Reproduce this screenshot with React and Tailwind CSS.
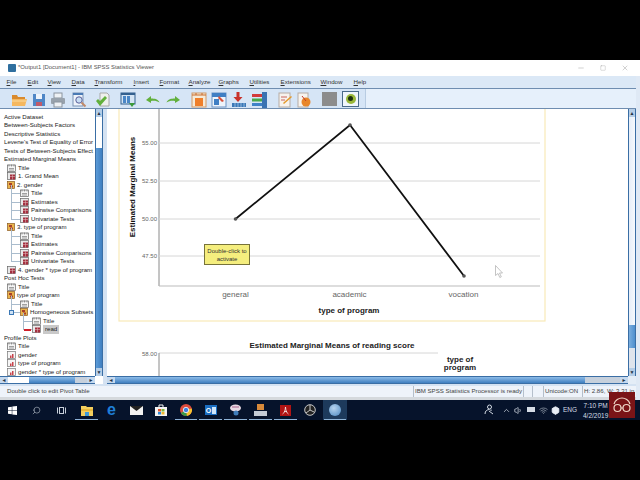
import { Minus, Square, X, Search, ChevronUp, Volume1, Wifi, Box } from "lucide-react"

const font = { sans: "font-['Liberation_Sans',Arial,sans-serif]" }

const menus = [
  ["F", "ile", 21],
  ["E", "dit", 20],
  ["V", "iew", 24],
  ["D", "ata", 23],
  ["T", "ransform", 39],
  ["I", "nsert", 26],
  ["F", "ormat", 29],
  ["A", "nalyze", 30],
  ["G", "raphs", 31],
  ["U", "tilities", 31],
  ["E", "xtensions", 40],
  ["W", "indow", 33],
  ["H", "elp", 20],
]

// d = indent, k = icon type
const rows = [
  { t: "Active Dataset", d: 0 },
  { t: "Between-Subjects Factors", d: 0 },
  { t: "Descriptive Statistics", d: 0 },
  { t: "Levene's Test of Equality of Error", d: 0 },
  { t: "Tests of Between-Subjects Effect", d: 0 },
  { t: "Estimated Marginal Means", d: 0 },
  { t: "Title", d: 3, k: "title" },
  { t: "1. Grand Mean", d: 3, k: "table" },
  { t: "2. gender", d: 3, k: "book" },
  { t: "Title", d: 16, k: "title", l: true },
  { t: "Estimates", d: 16, k: "table", l: true },
  { t: "Pairwise Comparisons", d: 16, k: "table", l: true },
  { t: "Univariate Tests", d: 16, k: "table", l: true },
  { t: "3. type of program", d: 3, k: "book" },
  { t: "Title", d: 16, k: "title", l: true },
  { t: "Estimates", d: 16, k: "table", l: true },
  { t: "Pairwise Comparisons", d: 16, k: "table", l: true },
  { t: "Univariate Tests", d: 16, k: "table", l: true },
  { t: "4. gender * type of program", d: 3, k: "table" },
  { t: "Post Hoc Tests", d: 0 },
  { t: "Title", d: 3, k: "title" },
  { t: "type of program", d: 3, k: "book" },
  { t: "Title", d: 16, k: "title", l: true },
  { t: "Homogeneous Subsets", d: 16, k: "book", l: true, minus: true },
  { t: "Title", d: 28, k: "title", l: true },
  { t: "read", d: 28, k: "table", l: true, sel: true },
  { t: "Profile Plots", d: 0 },
  { t: "Title", d: 3, k: "title" },
  { t: "gender", d: 3, k: "chart" },
  { t: "type of program", d: 3, k: "chart" },
  { t: "gender * type of program", d: 3, k: "chart" },
]

function TreeIcon({ kind }) {
  if (kind === "title")
    return (
      <svg width="9" height="8" viewBox="0 0 9 8" className="shrink-0">
        <rect x="0.5" y="1" width="8" height="6.5" fill="#f4f4f4" stroke="#666" strokeWidth="0.7" />
        <path d="M2 0.5v2M4.5 0.5v2M7 0.5v2M2 4.5h5M2 6h5" stroke="#666" strokeWidth="0.6" />
      </svg>
    )
  if (kind === "book")
    return (
      <svg width="8" height="8" viewBox="0 0 8 8" className="shrink-0">
        <rect x="0.5" y="0.5" width="7" height="7" fill="#e9b44c" stroke="#8a5a22" strokeWidth="0.7" />
        <path d="M2 2h3v2H2zM3 4.500h3v2H3z" fill="#a8402a" />
      </svg>
    )
  if (kind === "chart")
    return (
      <svg width="9" height="8" viewBox="0 0 9 8" className="shrink-0">
        <rect x="0.5" y="0.5" width="8" height="7" fill="#f6f6f6" stroke="#777" strokeWidth="0.7" />
        <path d="M3 7V4.500h1.500V7zM5 7V3h1.500v4z" fill="#c8434a" />
      </svg>
    )
  return (
    <svg width="9" height="8" viewBox="0 0 9 8" className="shrink-0">
      <rect x="0.5" y="0.5" width="8" height="7" fill="#e8e8e8" stroke="#666" strokeWidth="0.7" />
      <rect x="3" y="2.500" width="5" height="5" fill="#a33040" />
      <path d="M3 4.500h5M5.500 2.500v5" stroke="#e8c0c0" strokeWidth="0.5" />
    </svg>
  )
}

function TreeRow({ row }) {
  return (
    <div className="relative flex h-[8.5px] items-center gap-[2px] whitespace-nowrap" style={{ paddingLeft: row.d || 0 }}>
      {row.l && (
        <>
          <div className="absolute -top-[4px] h-[8.5px] w-px bg-[#a9bccd]" style={{ left: row.d - 9 }} />
          <div className="absolute top-[4px] h-px bg-[#a9bccd]" style={{ left: row.d - 9, width: 9 }} />
        </>
      )}
      {row.minus && <div className="absolute left-[5px] top-[1.5px] h-[5px] w-[5px] border border-[#3b78b5] bg-[#cfe2f5]" />}
      {row.sel && <div className="absolute left-[20px] top-[4px] h-[1.5px] w-[7px] bg-[#d0202a]" />}
      {row.k && <TreeIcon kind={row.k} />}
      <span className={row.sel ? "bg-[#c9c9c9] px-[2px] text-[#222]" : "text-[#222]"}>{row.t}</span>
    </div>
  )
}

function ToolIcon({ x, children }) {
  return (
    <svg width="16" height="16" viewBox="0 0 16 16" className="absolute top-[2.5px]" style={{ left: x }}>
      {children}
    </svg>
  )
}

function Toolbar() {
  return (
    <div className="relative h-[21px] shrink-0 border-y border-[#6f8db0] bg-[#e6f0fb]">
      <div className="absolute inset-y-0 left-0 w-[366px] border-r border-[#b8cce2] bg-[#d6e5f6]" />
      <ToolIcon x={11}>
        <path d="M1 3h5l1 2h7v3H1z" fill="#d98a2e" />
        <path d="M1 7h15l-2 7H1z" fill="#f5b860" />
        <path d="M1 9h14" stroke="#fbdca0" />
      </ToolIcon>
      <ToolIcon x={31}>
        <path d="M2 2h12v12H2z" fill="#4f86c6" />
        <rect x="5" y="2" width="6" height="5" fill="#eef3fa" />
        <rect x="5" y="10" width="6" height="4" fill="#c05a6a" />
      </ToolIcon>
      <ToolIcon x={50}>
        <rect x="4" y="1" width="8" height="5" fill="#eef1f4" stroke="#8a949e" />
        <rect x="1" y="6" width="14" height="6" rx="1" fill="#98a2ac" />
        <rect x="4" y="10" width="8" height="5" fill="#eef1f4" stroke="#8a949e" />
      </ToolIcon>
      <ToolIcon x={71}>
        <rect x="2" y="1" width="10" height="13" fill="#eef3fa" stroke="#7a93b4" />
        <rect x="2" y="1" width="10" height="2" fill="#4a7ab4" />
        <circle cx="8" cy="8" r="3.200" fill="#c8def3" stroke="#5b5f9a" />
        <path d="M10.500 10.500l4 4" stroke="#c08a6a" strokeWidth="2" />
      </ToolIcon>
      <ToolIcon x={95}>
        <path d="M5 1h7l2 2v11H5z" fill="#eef0ec" stroke="#a8a8a8" />
        <path d="M1 9l4 5 7-8-2-2-5 5-2-2z" fill="#62b03c" />
      </ToolIcon>
      <ToolIcon x={120}>
        <rect x="1" y="1" width="14" height="11" fill="#d4e4f4" stroke="#33608f" />
        <rect x="1" y="1" width="14" height="2" fill="#33608f" />
        <rect x="3" y="4" width="3" height="7" fill="#4a86c6" />
        <rect x="7" y="4" width="3" height="7" fill="#4a86c6" />
        <path d="M9 11h6l-3 4z" fill="#3b9a3a" />
      </ToolIcon>
      <ToolIcon x={145}>
        <path d="M1 8l5-4v2.500c4 0 7 .5 8.500 4-2.500-1.500-5-2-8.500-1.500V11z" fill="#62b03c" />
      </ToolIcon>
      <ToolIcon x={165}>
        <path d="M15 8l-5-4v2.500c-4 0-7 .5-8.500 4C4 9 6.500 8.500 10 9v2z" fill="#62b03c" />
      </ToolIcon>
      <ToolIcon x={191}>
        <rect x="1" y="1" width="14" height="14" fill="#f5ead8" stroke="#d09a68" />
        <path d="M1 3h14M5 1v2M11 1v2" stroke="#c96a2a" />
        <path d="M4 6h8v8H4z" fill="#ef7f2a" />
      </ToolIcon>
      <ToolIcon x={211}>
        <rect x="1" y="1" width="14" height="14" fill="#eef4fb" stroke="#6a93c4" />
        <rect x="1" y="1" width="14" height="4" fill="#3f7fc4" />
        <rect x="3" y="7" width="5" height="6" fill="#3f7fc4" />
        <path d="M8 4l5 5-2 1-4-4z" fill="#d8503a" />
      </ToolIcon>
      <ToolIcon x={231}>
        <path d="M5.500 0h3v5h3L7 10 2.500 5h3z" fill="#c8322a" />
        <rect x="1" y="11" width="14" height="4" fill="#3a78b8" />
        <path d="M4 11v4M7 11v4M10 11v4M13 11v4" stroke="#cfe0f2" strokeWidth="0.600" />
      </ToolIcon>
      <ToolIcon x={251}>
        <rect x="11" y="0" width="5" height="16" fill="#3b73b2" />
        <rect x="1" y="2" width="10" height="3" fill="#d23b3b" />
        <rect x="1" y="6.500" width="10" height="3" fill="#48a84a" />
        <rect x="1" y="11" width="10" height="3" fill="#3f82c8" />
      </ToolIcon>
      <ToolIcon x={277}>
        <rect x="2" y="1" width="11" height="14" fill="#f7f3ee" stroke="#b5aca4" />
        <path d="M4 5h6M4 8h4" stroke="#c9645c" />
        <path d="M6 11l8-7 1 1-8 7z" fill="#e39a2a" />
      </ToolIcon>
      <ToolIcon x={296}>
        <rect x="2" y="1" width="10" height="14" fill="#f7f3ee" stroke="#b5aca4" />
        <circle cx="10" cy="10" r="4.500" fill="#e8862a" />
        <path d="M6 4l4 5" stroke="#c43a2a" />
      </ToolIcon>
      <div className="absolute left-[322px] top-[3px] h-[14px] w-[15px] bg-[#8c8c8c]" />
      <div className="absolute left-[342px] top-[1.5px] flex h-[16px] w-[17px] items-center justify-center border border-[#4a6a8a] bg-[#f0f6fc]">
        <div className="flex h-[10px] w-[10px] items-center justify-center rounded-full bg-[#9ab83a]">
          <div className="h-[5px] w-[5px] rounded-full bg-[#20300f]" />
        </div>
      </div>
    </div>
  )
}

function VScrollbar({ left }) {
  return (
    <div className="flex w-[8px] shrink-0 flex-col border-x border-[#3a6ea5] bg-white">
      <div className="flex h-[8px] shrink-0 items-center justify-center bg-[#b5cde6] text-[5px] leading-none text-[#234]">▲</div>
      {left ? (
        <>
          <div className="h-[31px] bg-white" />
          <div className="flex-1 bg-gradient-to-r from-[#5b9bd8] to-[#3f7fc0]" />
        </>
      ) : (
        <>
          <div className="h-[208px] bg-gradient-to-r from-[#e6eef8] to-[#f6f9fd]" />
          <div className="h-[23px] bg-gradient-to-r from-[#7aaede] to-[#4f8fce]" />
          <div className="flex-1 bg-[#dfe4ec]" />
        </>
      )}
      <div className="flex h-[8px] shrink-0 items-center justify-center bg-[#b5cde6] text-[5px] leading-none text-[#234]">▼</div>
    </div>
  )
}

function Chart() {
  const grid = [
    [143, "55.00"],
    [181, "52.50"],
    [219, "50.00"],
    [256, "47.50"],
  ]
  const tx = (x) => x - 107
  const ty = (y) => y - 109
  const points = [
    [235.5, 219],
    [350, 125],
    [464, 276],
  ]
  return (
    <svg width="521" height="268" viewBox="0 0 521 268" className="block" fontFamily="'Liberation Sans', Arial, sans-serif">
      <rect x={tx(119)} y="-4" width={tx(545) - tx(119)} height={ty(321) + 4} fill="white" stroke="#f8eab8" strokeWidth="1.2" />
      <path d={`M${tx(159)} 0V${ty(286)}`} stroke="#8a8a8a" />
      {grid.map(([y, label]) => (
        <g key={label}>
          <path d={`M${tx(159)} ${ty(y)}H${tx(540)}`} stroke="#d6d6d6" strokeWidth="1" />
          <text x={tx(157)} y={ty(y) + 2} fontSize="6" textAnchor="end" fill="#666">{label}</text>
        </g>
      ))}
      <path d={`M${tx(159)} ${ty(286)}H${tx(540)}`} stroke="#bbb" strokeWidth="1" />
      <polyline points={points.map(([x, y]) => `${tx(x)},${ty(y)}`).join(" ")} fill="none" stroke="#111" strokeWidth="1.8" />
      {points.map(([x, y]) => (
        <circle key={x} cx={tx(x)} cy={ty(y)} r="1.800" fill="#555" />
      ))}
      <text transform={`translate(${tx(134.5)} ${ty(187)}) rotate(-90)`} fontSize="8" fontWeight="700" textAnchor="middle" fill="#111">Estimated Marginal Means</text>
      <text x={tx(235.5)} y={ty(297)} fontSize="8" textAnchor="middle" fill="#666">general</text>
      <text x={tx(349.5)} y={ty(297)} fontSize="8" textAnchor="middle" fill="#666">academic</text>
      <text x={tx(463.5)} y={ty(297)} fontSize="8" textAnchor="middle" fill="#666">vocation</text>
      <text x={tx(349)} y={ty(313)} fontSize="8" fontWeight="700" textAnchor="middle" fill="#222">type of program</text>
      <text x={tx(332)} y={ty(348)} fontSize="8" fontWeight="700" textAnchor="middle" fill="#222">Estimated Marginal Means of reading score</text>
      <path d={`M${tx(159)} ${ty(353)}H${tx(438)}`} stroke="#d6d6d6" />
      <path d={`M${tx(159)} ${ty(353)}V268`} stroke="#8a8a8a" />
      <text x={tx(157)} y={ty(356)} fontSize="6" textAnchor="end" fill="#666">58.00</text>
      <text x={tx(460)} y={ty(361.5)} fontSize="8" fontWeight="700" textAnchor="middle" fill="#222">type of</text>
      <text x={tx(460)} y={ty(370)} fontSize="8" fontWeight="700" textAnchor="middle" fill="#222">program</text>
      <path d={`M${tx(495.5)} ${ty(265.5)}v10l2.500-2 1.800 4 1.500-.7-1.800-3.800h3z`} fill="white" stroke="#aaa" strokeWidth="0.7" />
    </svg>
  )
}

function TaskIcon({ children, active, underline }) {
  return (
    <div className={`relative flex h-full w-[24.85px] items-center justify-center ${active ? "bg-[#1d3a5c]" : ""}`}>
      {children}
      {underline && <div className="absolute bottom-0 left-[1px] right-[1px] h-px bg-[#8fb4d8]" />}
    </div>
  )
}

function Taskbar() {
  return (
    <div className="relative flex h-[20px] shrink-0 items-center bg-[#06132b]">
      <div className="-ml-[0.4px] flex h-full items-center">
        <TaskIcon>
          <svg width="9" height="9" viewBox="0 0 9 9"><path d="M0 1.300l3.800-.6v3.500H0zM4.300.6L9 0v4.200H4.300zM0 4.700h3.800v3.500L0 7.700zM4.300 4.700H9V9l-4.700-.6z" fill="#fff" /></svg>
        </TaskIcon>
        <TaskIcon><Search size={9} color="#c8d0da" strokeWidth={1.5} className="-scale-x-100" /></TaskIcon>
        <TaskIcon>
          <svg width="9" height="9" viewBox="0 0 9 9" fill="none" stroke="#c8d0da"><rect x="2.500" y="1.500" width="4" height="6" /><path d="M.5 1.500v6M8.500 1.500v6" /></svg>
        </TaskIcon>
        <TaskIcon underline>
          <svg width="12" height="11" viewBox="0 0 12 11"><path d="M0 1h5l1 1h6v9H0z" fill="#f4cf5e" /><rect x="0" y="4" width="12" height="2" fill="#e7b73c" /><rect x="4" y="7" width="4" height="4" fill="#3f9ad6" /></svg>
        </TaskIcon>
        <TaskIcon>
          <span className="font-['Liberation_Sans',sans-serif] text-[16px] font-bold leading-none text-[#1f7fd8]">e</span>
        </TaskIcon>
        <TaskIcon>
          <svg width="13" height="9" viewBox="0 0 13 9"><path d="M0 0h13v9H0z" fill="#f2f2f2" /><path d="M0 0l6.500 5L13 0z" fill="#222" /></svg>
        </TaskIcon>
        <TaskIcon>
          <svg width="12" height="12" viewBox="0 0 12 12"><path d="M0 3h12v9H0z" fill="#f4f4f4" /><path d="M4 3V1h4v2" fill="none" stroke="#f4f4f4" /><rect x="3" y="5" width="3" height="2.500" fill="#e2512a" /><rect x="6.500" y="5" width="3" height="2.500" fill="#7eb83a" /><rect x="3" y="8" width="3" height="2.500" fill="#2f8ad8" /><rect x="6.500" y="8" width="3" height="2.500" fill="#f2b82e" /></svg>
        </TaskIcon>
        <TaskIcon underline>
          <svg width="12" height="12" viewBox="0 0 12 12"><circle cx="6" cy="6" r="6" fill="#dd4b3e" /><path d="M6 6L.8 9A6 6 0 0 0 7 11.900z" fill="#3a9a4a" /><path d="M6 6l1 5.900A6 6 0 0 0 11.800 4.500z" fill="#f6c22e" /><circle cx="6" cy="6" r="2.700" fill="#3d80e0" stroke="#fff" strokeWidth="0.8" /></svg>
        </TaskIcon>
        <TaskIcon underline>
          <div className="flex h-[10px] w-[12px] items-center bg-[#1b6ec2] pl-[1px] font-['Liberation_Sans',sans-serif] text-[7px] font-bold leading-none text-white">O<span className="ml-[1px] block h-[7px] w-[4px] bg-[#cfe6fa]" /></div>
        </TaskIcon>
        <TaskIcon underline>
          <svg width="13" height="12" viewBox="0 0 13 12"><ellipse cx="6.500" cy="4" rx="5.500" ry="3.500" fill="#e8dbe4" /><path d="M3 3h7" stroke="#a8608a" /><circle cx="7" cy="9" r="2.500" fill="#3f7dba" /></svg>
        </TaskIcon>
        <TaskIcon underline>
          <svg width="13" height="13" viewBox="0 0 13 13"><rect x="3" y="0" width="7" height="6" fill="#d88a3a" /><rect x="0" y="7" width="13" height="5" fill="#c4ccd6" /></svg>
        </TaskIcon>
        <TaskIcon underline>
          <svg width="11" height="11" viewBox="0 0 11 11"><rect width="11" height="11" fill="#b01414" /><path d="M2.500 9c2-1 2.500-3 3-7 .5 4 1 6 3 7M4 6.500h3" fill="none" stroke="#fff" strokeWidth="0.7" /></svg>
        </TaskIcon>
        <TaskIcon>
          <svg width="12" height="12" viewBox="0 0 12 12" fill="#222" stroke="#c8c8c8"><circle cx="6" cy="6" r="5.300" /><path d="M6 1v5l4 2M6 6l-4 3" fill="none" /></svg>
        </TaskIcon>
        <TaskIcon active underline>
          <div className="h-[12px] w-[12px] rounded-full bg-[radial-gradient(circle_at_40%_35%,#b7d4ee,#4a87c0)]" />
        </TaskIcon>
      </div>
      <div className="absolute left-[484px] top-[4px] text-[9px] leading-none text-[#d5dce5]">
        <svg width="10" height="11" viewBox="0 0 10 11" fill="none" stroke="#d5dce5"><circle cx="5.500" cy="3" r="2" /><path d="M1 10c0-3 2-4.500 4.500-4.500M5 7l4 3M7 5.500V7" /></svg>
      </div>
      <ChevronUp size={9} color="#c8d0da" className="absolute left-[502px] top-[5.5px]" />
      <Volume1 size={9} color="#d5dce5" className="absolute left-[514px] top-[5.5px]" />
      <div className="absolute left-[527px] top-[7px] h-[5px] w-[8px] bg-[#d5dce5]" />
      <Wifi size={9} color="#9aa4b2" className="absolute left-[539px] top-[6px]" />
      <Box size={9} color="#e8edf4" fill="#e8edf4" className="absolute left-[551px] top-[5.5px]" />
      <span className={`absolute left-[563px] top-[6px] text-[6.5px] leading-[8px] text-[#d5dce5] ${font.sans}`}>ENG</span>
      <div className={`absolute left-[583px] top-[1px] text-center text-[6.5px] leading-[10px] text-[#d5dce5] ${font.sans}`}>
        <div>7:10 PM</div>
        <div>4/2/2019</div>
      </div>
    </div>
  )
}

export default function App() {
  return (
    <div className={`relative flex h-[480px] w-[640px] flex-col overflow-hidden bg-black ${font.sans}`}>
      <div className="h-[60px] shrink-0" />
      <div className="flex h-[340px] shrink-0 flex-col bg-[#dfe9f5] pr-[4px]">
        {/* title bar */}
        <div className="-mr-[4px] flex h-[16px] shrink-0 items-center bg-white pl-[8px]">
          <div className="h-[8px] w-[8px] rounded-[1px] bg-[#2f6f9f]" />
          <span className="ml-[2px] text-[5.9px] leading-none text-[#555]">*Output1 [Document1] - IBM SPSS Statistics Viewer</span>
          <div className="ml-auto flex items-center gap-[15px] pr-[11px] text-[#777]">
            <Minus size={8} strokeWidth={1} />
            <Square size={6} strokeWidth={1} />
            <X size={8} strokeWidth={1} />
          </div>
        </div>
        {/* menu */}
        <div className="flex h-[12px] shrink-0 items-center bg-[#dbe8f6] pl-[6.5px] text-[6.2px] leading-none text-[#333]">
          {menus.map(([first, rest, w], i) => (
            <div key={i} className="shrink-0 whitespace-nowrap" style={{ width: w }}>
              <span className="underline">{first}</span>{rest}
            </div>
          ))}
        </div>
        <Toolbar />
        {/* main */}
        <div className="flex min-h-0 flex-1 bg-[#d4e2f2] pb-[2px]">
          <div className="flex w-[103px] shrink-0 flex-col">
            <div className="flex min-h-0 flex-1">
              <div className="flex-1 overflow-hidden bg-white pl-[4px] pt-[3.5px] text-[6.1px] leading-[8.5px]">
                {rows.map((row, i) => (
                  <TreeRow key={i} row={row} />
                ))}
              </div>
              <VScrollbar left />
            </div>
            <div className="flex h-[8px] shrink-0">
              <div className="flex w-[95px] items-center border-y border-[#3a6ea5] bg-gradient-to-b from-[#8dbce8] to-[#3f7fc0]">
                <div className="flex h-full w-[8px] items-center justify-center bg-[#c6d9ee] text-[5px] leading-none text-[#234]">◄</div>
                <div className="h-full w-[21px] bg-white" />
                <div className="ml-auto h-full w-[12px] bg-[#c6d0dc]" />
                <div className="flex h-full w-[8px] items-center justify-center bg-[#c6d9ee] text-[5px] leading-none text-[#234]">►</div>
              </div>
              <div className="w-[8px] bg-white" />
            </div>
          </div>
          <div className="w-[4px] shrink-0 bg-[#d4e2f2]" />
          <div className="flex min-w-0 flex-1 flex-col">
            <div className="flex min-h-0 flex-1">
              <div className="min-w-0 flex-1 overflow-hidden bg-white">
                <Chart />
              </div>
              <VScrollbar />
            </div>
            <div className="flex h-[8px] shrink-0">
              <div className="flex flex-1 items-center border-y border-[#3a6ea5] bg-gradient-to-b from-[#8dbce8] to-[#3f7fc0]">
                <div className="flex h-full w-[8px] items-center justify-center bg-[#c6d9ee] text-[5px] leading-none text-[#234]">◄</div>
                <div className="ml-auto h-full w-[35px] bg-[#c6d0dc]" />
                <div className="flex h-full w-[8px] items-center justify-center bg-[#c6d9ee] text-[5px] leading-none text-[#234]">►</div>
              </div>
              <div className="w-[8px] bg-[#e4edf7]" />
            </div>
          </div>
        </div>
        {/* status bar */}
        <div className="flex h-[11px] shrink-0 items-center bg-[#eef3fa] pl-[7px] text-[6.1px] leading-none text-[#444]">
          <span>Double click to edit Pivot Table</span>
          <div className="ml-auto flex h-full items-center">
            <div className="flex h-full w-[110px] items-center whitespace-nowrap border-l border-[#b5bfcb] pl-[1px]">IBM SPSS Statistics Processor is ready</div>
            <div className="h-full w-[9px] border-l border-[#b5bfcb]" />
            <div className="h-full w-[11px] border-l border-[#b5bfcb]" />
            <div className="flex h-full w-[39px] items-center whitespace-nowrap border-l border-[#b5bfcb] pl-[1px]">Unicode:ON</div>
            <div className="flex h-full w-[54px] items-center whitespace-nowrap border-l border-[#b5bfcb] pl-[1px]">H: 2.86, W: 3.31 in</div>
          </div>
        </div>
        <div className="h-[3px] shrink-0 bg-[#d5d9dd]" />
      </div>
      <Taskbar />

      {/* comment tooltip over the chart */}
      <div className="absolute left-[204px] top-[244px] flex h-[21px] w-[46px] items-center justify-center border border-[#77733a] bg-[#f5ee7e] text-center text-[6px] leading-[8px] text-[#333]">
        Double-click to activate
      </div>

      {/* channel logo */}
      <div className="absolute left-[609px] top-[392px] flex h-[26px] w-[26px] items-center justify-center bg-[#7a1417]">
        <svg width="20" height="16" viewBox="0 0 20 16" fill="none" stroke="#f0d8c8" strokeWidth="1.2">
          <circle cx="5.500" cy="11" r="3.500" />
          <circle cx="14.500" cy="11" r="3.500" />
          <path d="M9 11h2M2 7C3 3 7 1 10 1s7 2 8 6" />
        </svg>
      </div>
    </div>
  )
}
